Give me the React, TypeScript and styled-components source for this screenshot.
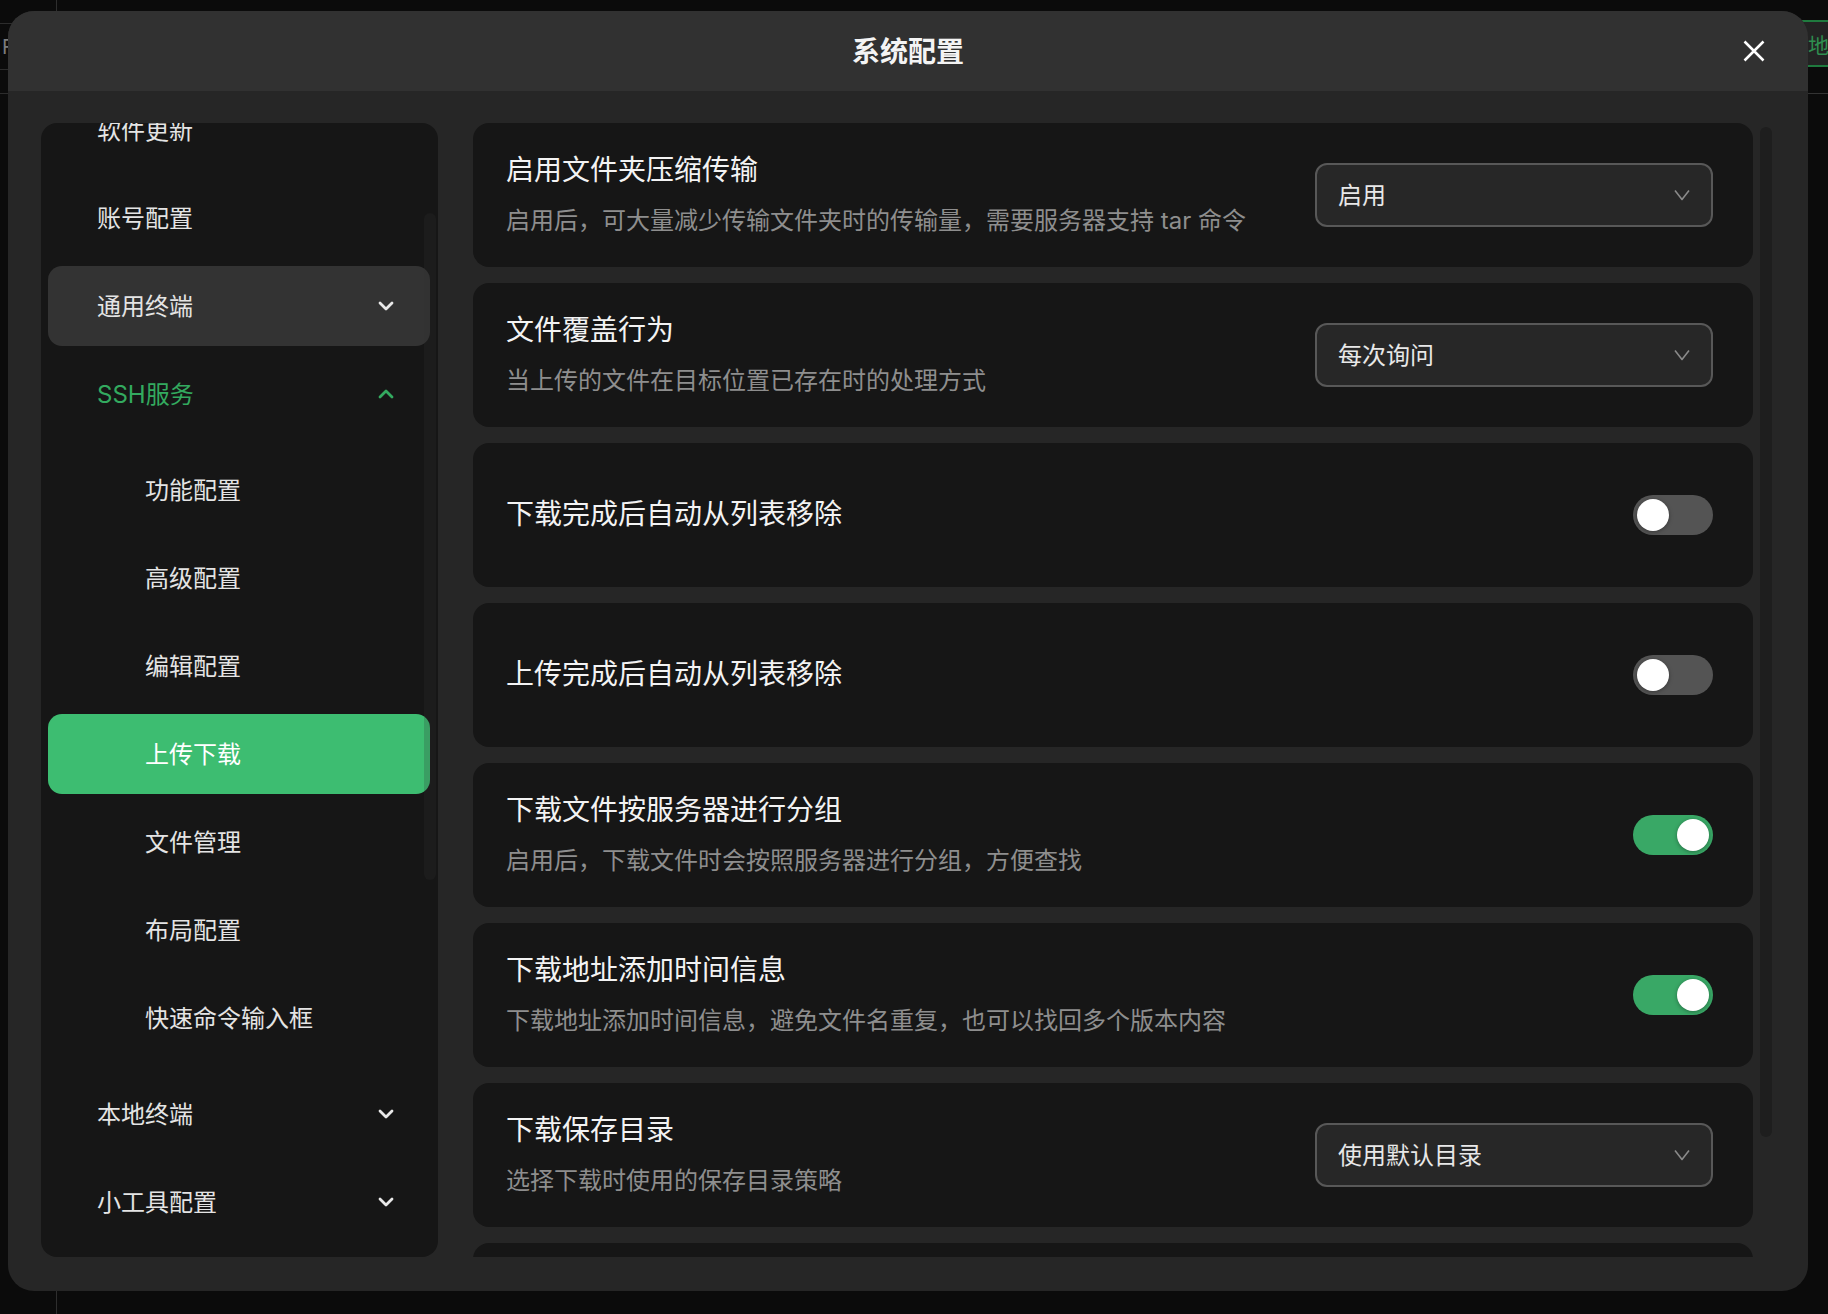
import React, { useLayoutEffect, useRef } from "react";
import styled, { createGlobalStyle } from "styled-components";

const GlobalStyle = createGlobalStyle`
  html, body { margin: 0; padding: 0; background: #0b0b0b; }
  body {
    font-family: "Inter", "Noto Sans CJK SC", sans-serif;
    -webkit-font-smoothing: antialiased;
  }
  * { box-sizing: border-box; }
`;

/* ---------- background app (behind the dialog) ---------- */
const Shell = styled.div`
  position: relative;
  width: 1828px;
  height: 1314px;
  overflow: hidden;
  background: #0b0b0b;
  display: grid;
  grid-template-columns: 57px 1fr;
`;

const Rail = styled.div`
  border-right: 1px solid #2e2e2e;
  display: flex;
  flex-direction: column;
`;

const RailCell = styled.div<{ $h: number }>`
  height: ${(p) => p.$h}px;
  border-bottom: 1px solid #2c2c2c;
  color: #7c7c7c;
  font-size: 20px;
  display: flex;
  align-items: center;
  padding-left: 2px;
`;

const Main = styled.div`
  display: flex;
  flex-direction: column;
`;

const TopBar = styled.div`
  height: 94px;
  border-bottom: 1px solid #333;
  display: flex;
  justify-content: flex-end;
  align-items: flex-start;
  padding-top: 20px;
`;

const Tab = styled.div`
  height: 47px;
  width: 70px;
  margin-right: -30px;
  border: 2px solid #1f7a3e;
  background: #232323;
  color: #2f8f50;
  font-size: 21px;
  display: flex;
  align-items: center;
  padding-left: 18px;
`;

/* ---------- dialog ---------- */
const Dialog = styled.div`
  position: absolute;
  left: 8px;
  top: 11px;
  width: 1800px;
  height: 1280px;
  border-radius: 26px;
  background: #262626;
  overflow: hidden;
  display: flex;
  flex-direction: column;
`;

const Header = styled.header`
  flex: none;
  height: 80px;
  background: #313131;
  display: grid;
  grid-template-columns: 1fr auto 1fr;
  align-items: center;
  padding: 0 43px;
`;

const HeaderTitle = styled.h1`
  margin: 0 0 2px;
  grid-column: 2;
  font-size: 28px;
  font-weight: 600;
  color: #f4f4f4;
`;

const CloseButton = styled.button`
  grid-column: 3;
  justify-self: end;
  width: 22px;
  height: 22px;
  padding: 0;
  border: 0;
  background: none;
  display: flex;
  cursor: pointer;
`;

const Body = styled.div`
  flex: 1;
  min-height: 0;
  display: grid;
  grid-template-columns: 397px 1fr;
  grid-template-rows: minmax(0, 1fr);
  column-gap: 35px;
  padding: 32px 36px 34px 33px;
`;

/* ---------- sidebar ---------- */
const Sidebar = styled.nav`
  position: relative;
  background: #161616;
  border-radius: 16px;
  overflow: hidden;
  min-height: 0;
`;

const SideScroll = styled.div`
  height: 100%;
  overflow-y: auto;
  scrollbar-width: none;
  &::-webkit-scrollbar { display: none; }
  padding: 9px 8px 15px 7px;
  display: flex;
  flex-direction: column;
  gap: 8px;
`;

const SubList = styled.div`
  display: flex;
  flex-direction: column;
  gap: 8px;
  padding: 8px 0;
`;

type Variant = "plain" | "hover" | "active" | "open";

const NavItem = styled.div<{ $variant: Variant; $sub?: boolean }>`
  flex: none;
  height: 80px;
  border-radius: 14px;
  display: flex;
  align-items: center;
  justify-content: space-between;
  padding: 0 36px 3px ${(p) => (p.$sub ? 97 : 49)}px;
  font-size: 24px;
  color: ${(p) =>
    p.$variant === "open" ? "#33aa5f" : p.$variant === "active" ? "#ffffff" : "#e4e4e4"};
  background: ${(p) =>
    p.$variant === "hover" ? "#333333" : p.$variant === "active" ? "#3dbd71" : "transparent"};

  svg { margin-top: 3px; }
`;

const SideThumb = styled.div`
  position: absolute;
  right: 2px;
  top: 90px;
  width: 12px;
  height: 667px;
  border-radius: 6px;
  background: rgba(50, 50, 50, 0.22);
  pointer-events: none;
`;

/* ---------- content ---------- */
const Content = styled.section`
  position: relative;
  min-height: 0;
  overflow: hidden;
`;

const CardList = styled.div`
  height: 100%;
  overflow: hidden;
  padding-right: 19px;
  display: flex;
  flex-direction: column;
  gap: 16px;
`;

const Card = styled.div`
  flex: none;
  min-height: 144px;
  background: #161616;
  border-radius: 16px;
  display: flex;
  align-items: center;
  gap: 24px;
  padding: 0 40px 0 33px;
`;

const CardText = styled.div`
  flex: 1;
  display: flex;
  flex-direction: column;
  padding-bottom: 2px;
`;

const CardTitle = styled.div`
  font-size: 28px;
  line-height: 38px;
  font-weight: 400;
  color: #f3f3f3;
`;

const CardDesc = styled.div`
  margin-top: 15px;
  font-size: 24px;
  line-height: 34px;
  color: #8e8e8e;
`;

const ContentThumb = styled.div`
  position: absolute;
  right: 0;
  top: 4px;
  width: 12px;
  height: 1010px;
  border-radius: 6px;
  background: #1e1e1e;
  pointer-events: none;
`;

const SelectBox = styled.div`
  flex: none;
  width: 398px;
  height: 64px;
  border: 2px solid #585858;
  border-radius: 12px;
  background: #272727;
  display: flex;
  align-items: center;
  justify-content: space-between;
  padding: 0 21px 3px 21px;
  font-size: 24px;
  color: #e8e8e8;

  svg { margin-top: 3px; }
`;

const ToggleTrack = styled.div<{ $on: boolean }>`
  flex: none;
  position: relative;
  width: 80px;
  height: 40px;
  border-radius: 20px;
  background: ${(p) => (p.$on ? "#39a866" : "#545454")};
`;

const ToggleKnob = styled.span<{ $on: boolean }>`
  position: absolute;
  top: 4px;
  left: ${(p) => (p.$on ? 44 : 4)}px;
  width: 32px;
  height: 32px;
  border-radius: 50%;
  background: #ffffff;
  box-shadow: 0 1px 4px rgba(0, 0, 0, 0.35);
`;

/* ---------- icons ---------- */
const Chevron = ({ up, color }: { up?: boolean; color: string }) => (
  <svg width="16" height="10" viewBox="0 0 16 10" fill="none">
    <path
      d={up ? "M2 8 L8 2 L14 8" : "M2 2 L8 8 L14 2"}
      stroke={color}
      strokeWidth="2.8"
      strokeLinecap="round"
      strokeLinejoin="round"
    />
  </svg>
);

const SelectChevron = () => (
  <svg width="16" height="12" viewBox="0 0 16 12" fill="none">
    <path d="M1 1.5 L8 10.5 L15 1.5" stroke="#8a8a8a" strokeWidth="1.6" strokeLinejoin="round" />
  </svg>
);

const CloseIcon = () => (
  <svg width="22" height="22" viewBox="0 0 22 22" fill="none">
    <path d="M1.5 1.5 L20.5 20.5 M20.5 1.5 L1.5 20.5" stroke="#ffffff" strokeWidth="2.5" />
  </svg>
);

const Select = ({ value }: { value: string }) => (
  <SelectBox>
    <span>{value}</span>
    <SelectChevron />
  </SelectBox>
);

const Toggle = ({ on }: { on: boolean }) => (
  <ToggleTrack $on={on}>
    <ToggleKnob $on={on} />
  </ToggleTrack>
);

type Setting = {
  title?: string;
  desc?: string;
  control: { kind: "select"; value: string } | { kind: "toggle"; on: boolean } | { kind: "none" };
};

const settings: Setting[] = [
  {
    title: "启用文件夹压缩传输",
    desc: "启用后，可大量减少传输文件夹时的传输量，需要服务器支持 tar 命令",
    control: { kind: "select", value: "启用" },
  },
  {
    title: "文件覆盖行为",
    desc: "当上传的文件在目标位置已存在时的处理方式",
    control: { kind: "select", value: "每次询问" },
  },
  { title: "下载完成后自动从列表移除", control: { kind: "toggle", on: false } },
  { title: "上传完成后自动从列表移除", control: { kind: "toggle", on: false } },
  {
    title: "下载文件按服务器进行分组",
    desc: "启用后，下载文件时会按照服务器进行分组，方便查找",
    control: { kind: "toggle", on: true },
  },
  {
    title: "下载地址添加时间信息",
    desc: "下载地址添加时间信息，避免文件名重复，也可以找回多个版本内容",
    control: { kind: "toggle", on: true },
  },
  {
    title: "下载保存目录",
    desc: "选择下载时使用的保存目录策略",
    control: { kind: "select", value: "使用默认目录" },
  },
  { control: { kind: "none" } },
];

const sshChildren = ["功能配置", "高级配置", "编辑配置", "上传下载", "文件管理", "布局配置", "快速命令输入框"];

export default function App() {
  const sideRef = useRef<HTMLDivElement>(null);

  useLayoutEffect(() => {
    const el = sideRef.current;
    if (el) el.scrollTop = el.scrollHeight;
  }, []);

  return (
    <>
      <GlobalStyle />
      <Shell>
        <Rail>
          <RailCell $h={24} />
          <RailCell $h={46}>F</RailCell>
          <RailCell $h={24} />
        </Rail>
        <Main>
          <TopBar>
            <Tab>地</Tab>
          </TopBar>
        </Main>

        <Dialog>
          <Header>
            <HeaderTitle>系统配置</HeaderTitle>
            <CloseButton aria-label="关闭">
              <CloseIcon />
            </CloseButton>
          </Header>
          <Body>
            <Sidebar>
              <SideScroll ref={sideRef}>
                <NavItem $variant="plain">软件更新</NavItem>
                <NavItem $variant="plain">账号配置</NavItem>
                <NavItem $variant="hover">
                  <span>通用终端</span>
                  <Chevron color="#e8e8e8" />
                </NavItem>
                <NavItem $variant="open">
                  <span>SSH服务</span>
                  <Chevron up color="#33aa5f" />
                </NavItem>
                <SubList>
                  {sshChildren.map((name) => (
                    <NavItem key={name} $sub $variant={name === "上传下载" ? "active" : "plain"}>
                      {name}
                    </NavItem>
                  ))}
                </SubList>
                <NavItem $variant="plain">
                  <span>本地终端</span>
                  <Chevron color="#e8e8e8" />
                </NavItem>
                <NavItem $variant="plain">
                  <span>小工具配置</span>
                  <Chevron color="#e8e8e8" />
                </NavItem>
              </SideScroll>
              <SideThumb />
            </Sidebar>

            <Content>
              <CardList>
                {settings.map((s, i) => (
                  <Card key={i}>
                    <CardText>
                      {s.title && <CardTitle>{s.title}</CardTitle>}
                      {s.desc && <CardDesc>{s.desc}</CardDesc>}
                    </CardText>
                    {s.control.kind === "select" && <Select value={s.control.value} />}
                    {s.control.kind === "toggle" && <Toggle on={s.control.on} />}
                  </Card>
                ))}
              </CardList>
              <ContentThumb />
            </Content>
          </Body>
        </Dialog>
      </Shell>
    </>
  );
}
